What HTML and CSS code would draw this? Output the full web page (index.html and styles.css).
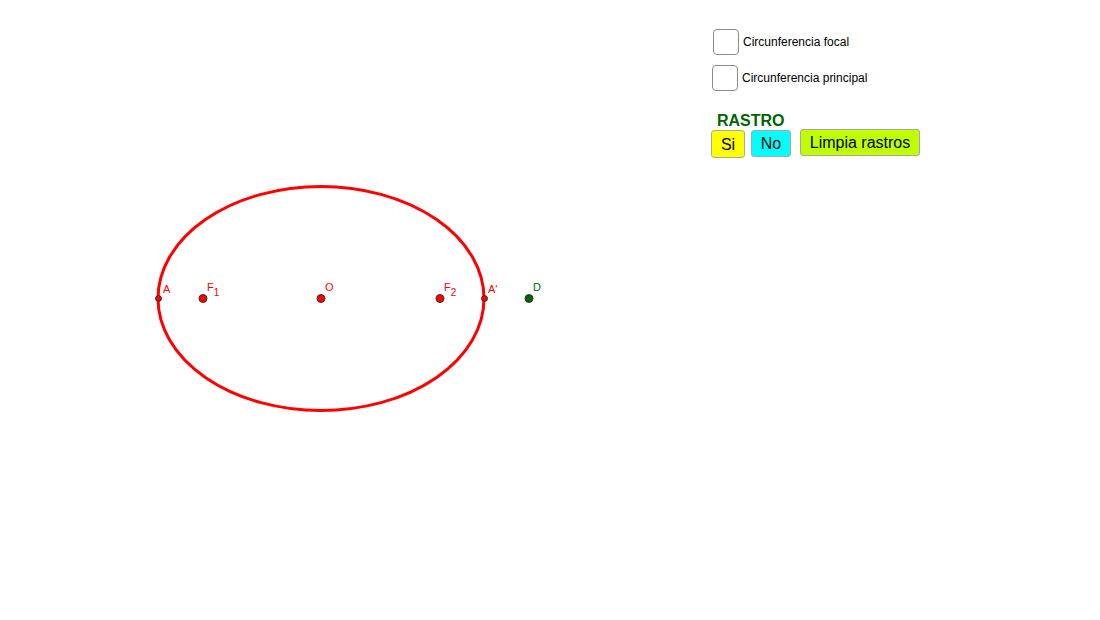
FILE: index.html
```html
<!DOCTYPE html>
<html lang="es">
<head>
<meta charset="utf-8">
<title>Elipse</title>
<link rel="stylesheet" href="styles.css">
</head>
<body>
<div class="applet">
  <svg class="canvas" width="1100" height="620" viewBox="0 0 1100 620">
    <ellipse cx="321" cy="298.5" rx="163" ry="112" fill="none" stroke="#ff0000" stroke-width="3"/>
    <g stroke="#333" stroke-width="1">
      <circle cx="158.5" cy="298.5" r="3" fill="#ff0000"/>
      <circle cx="484.5" cy="298.5" r="3" fill="#ff0000"/>
      <circle cx="203" cy="298.5" r="4" fill="#ff0000"/>
      <circle cx="321" cy="298.5" r="4" fill="#ff0000"/>
      <circle cx="440" cy="298.5" r="4" fill="#ff0000"/>
      <circle cx="529" cy="298.5" r="4" fill="#006400"/>
    </g>
    <g class="lbl" fill="#ff0000">
      <text x="163" y="293">A</text>
      <text x="207" y="291">F<tspan class="sub" dy="5">1</tspan></text>
      <text x="325" y="291">O</text>
      <text x="444" y="291">F<tspan class="sub" dy="5">2</tspan></text>
      <text x="488" y="293">A'</text>
    </g>
    <text class="lbl" x="533" y="291" fill="#006400">D</text>
  </svg>
  <div class="panel">
    <label class="check c1"><span class="box"></span><span class="ctext">Circunferencia focal</span></label>
    <label class="check c2"><span class="box"></span><span class="ctext">Circunferencia principal</span></label>
    <div class="rastro">RASTRO</div>
    <div class="buttons">
      <button class="btn si">Si</button>
      <button class="btn no">No</button>
      <button class="btn limpia">Limpia rastros</button>
    </div>
  </div>
</div>
</body>
</html>
```
FILE: styles.css
```css
html, body {
  margin: 0;
  padding: 0;
  background: #ffffff;
  font-family: "Liberation Sans", Arial, sans-serif;
}
.applet {
  position: relative;
  width: 1100px;
  height: 620px;
  overflow: hidden;
}
.canvas {
  display: block;
}
.lbl {
  font-family: "Liberation Sans", Arial, sans-serif;
  font-size: 11px;
}
.sub {
  font-size: 10px;
}
.panel {
  position: absolute;
  left: 711px;
  top: 28px;
  display: flex;
  flex-direction: column;
  align-items: flex-start;
}
.check {
  display: flex;
  align-items: center;
  font-size: 12px;
  color: #000;
}
.c1 {
  margin-left: 2px;
  margin-top: 1px;
}
.c2 {
  margin-top: 10px;
  margin-left: 1px;
}
.box {
  width: 24px;
  height: 24px;
  border: 1px solid #8a8a8a;
  border-radius: 4px;
  background: #fff;
  margin-right: 4px;
}
.rastro {
  margin-top: 21px;
  margin-left: 6px;
  font-size: 16px;
  font-weight: bold;
  color: #006400;
  line-height: 18px;
}
.buttons {
  display: flex;
  align-items: flex-start;
  margin-top: 0;
}
.btn {
  font-family: "Liberation Sans", Arial, sans-serif;
  font-size: 16px;
  color: #000;
  border: 1px solid #a8a8a8;
  border-radius: 3px;
  padding: 0;
  height: 27px;
  line-height: 25px;
  text-align: center;
}
.si {
  width: 34px;
  height: 28px;
  background: #ffff00;
}
.no {
  width: 40px;
  margin-left: 6px;
  background: #00ffff;
}
.limpia {
  width: 120px;
  margin-left: 9px;
  margin-top: -1px;
  background: #bfff00;
}
```
